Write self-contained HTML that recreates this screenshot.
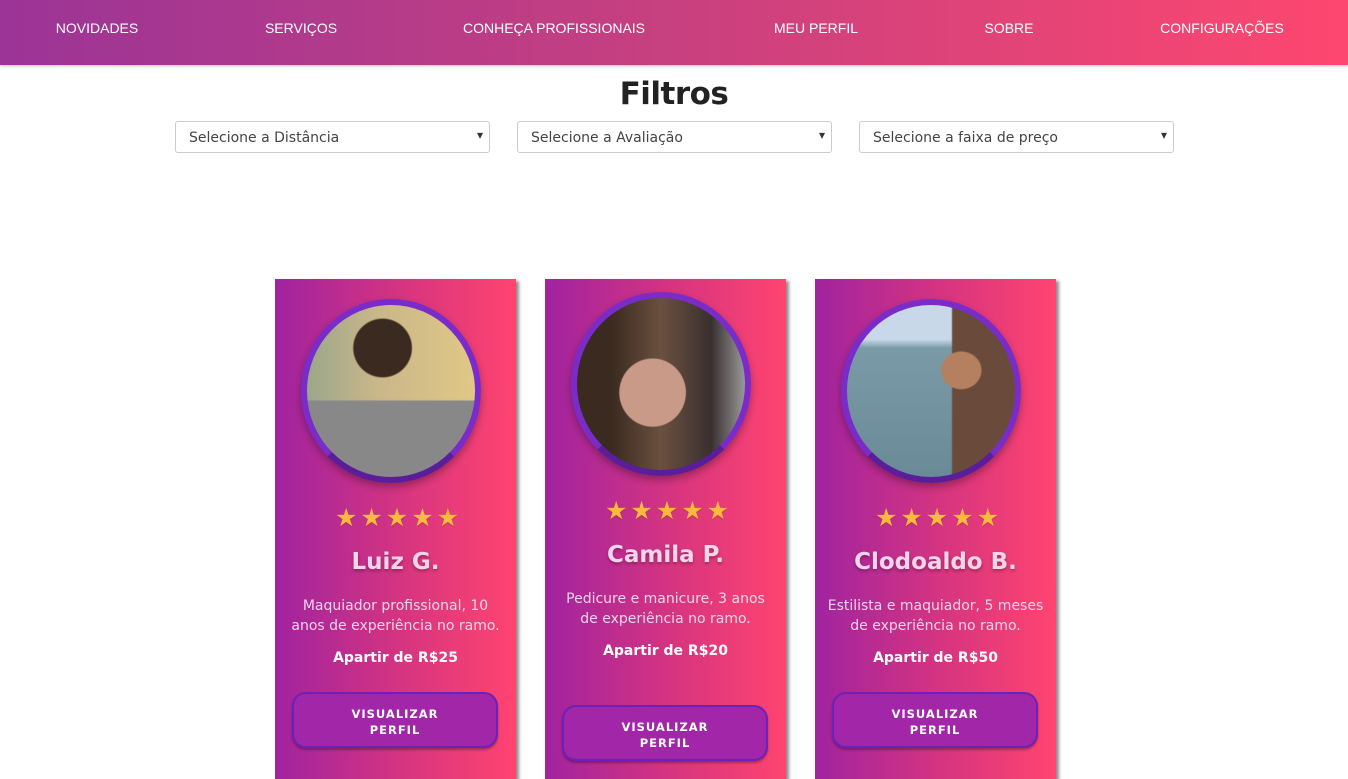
<!DOCTYPE html><html><head><meta charset="utf-8"><style>
*{margin:0;padding:0;box-sizing:border-box}
body{width:1348px;height:767px;overflow:hidden;background:#fff;font-family:"DejaVu Sans","Liberation Sans",sans-serif;position:relative}
nav{position:absolute;left:0;top:0;width:1348px;height:65px;background:linear-gradient(90deg,#9b3497,#c8407f 50%,#fd4770);box-shadow:0 1px 3px rgba(0,0,0,.25)}
nav span{position:absolute;top:20px;color:#fff;font:14px "Liberation Sans",sans-serif;transform:translateX(-50%);white-space:nowrap}
h1{position:absolute;top:76px;left:0;width:1348px;text-align:center;font:bold 31px "DejaVu Sans",sans-serif;color:#222;letter-spacing:-0.5px}
.sel{position:absolute;top:121px;width:315px;height:32px;border:1px solid #ccc;border-radius:3px;font-size:14px;color:#444;padding:8px 13px}
.sel:after{content:"▾";position:absolute;right:6px;top:6px;font-size:12px;color:#333}
.card{position:absolute;top:279px;width:241px;height:500px;background:linear-gradient(90deg,#a0239f,#d8357f 55%,#ff4470);box-shadow:3px 2px 3px rgba(0,0,0,.45);color:#fff;text-align:center}
.ph{position:absolute;left:26px;width:180px;height:184px;border-radius:50%;border:6px solid #7a2cc8;border-bottom-color:#5a1e9a;box-shadow:0 4px 8px rgba(0,0,0,.3);overflow:hidden}
.st{position:absolute;left:3px;width:241px;font-size:25px;color:#fcb940;letter-spacing:3px;text-shadow:0 1px 1px rgba(150,60,0,.4)}
.nm{position:absolute;left:0;width:241px;font-size:23px;font-weight:bold;color:#f3d4ea;text-shadow:0 2px 3px rgba(0,0,0,.3)}
.ds{position:absolute;left:0;width:241px;font-size:14px;line-height:20px;color:#f3d4ea}
.pr{position:absolute;left:0;width:241px;font-size:14px;font-weight:bold}
.bt{position:absolute;left:17px;width:206px;height:56px;border-radius:14px;background:#a126a8;border:2px solid #6c22b8;box-shadow:0 2px 2px rgba(0,0,0,.3);font-size:11.5px;font-weight:bold;letter-spacing:1px;line-height:16px;padding-top:12px}
</style></head><body>
<nav><span style="left:97px">NOVIDADES</span><span style="left:301px">SERVIÇOS</span><span style="left:554px">CONHEÇA PROFISSIONAIS</span><span style="left:816px">MEU PERFIL</span><span style="left:1009px">SOBRE</span><span style="left:1222px">CONFIGURAÇÕES</span></nav>
<h1>Filtros</h1>
<div class="sel" style="left:175px">Selecione a Distância</div>
<div class="sel" style="left:517px">Selecione a Avaliação</div>
<div class="sel" style="left:859px">Selecione a faixa de preço</div>

<div class="card" style="left:275px">
<div class="ph" style="top:20px;background:radial-gradient(circle at 45% 25%,#3a2a20 0 18%,transparent 19%),linear-gradient(180deg,transparent 55%,#888 56%),linear-gradient(90deg,#9aa78a,#c9b68a 40%,#e0c886)"></div>
<div class="st" style="top:224px">★★★★★</div>
<div class="nm" style="top:270px">Luiz G.</div>
<div class="ds" style="top:317px">Maquiador profissional, 10<br>anos de experiência no ramo.</div>
<div class="pr" style="top:371px">Apartir de R$25</div>
<div class="bt" style="top:413px">VISUALIZAR<br>PERFIL</div>
</div>

<div class="card" style="left:545px">
<div class="ph" style="top:13px;background:radial-gradient(ellipse at 45% 55%,#c99a88 0 25%,transparent 26%),linear-gradient(90deg,#3a2a20 20%,#6a5040 50%,#3a3030 80%,#999)"></div>
<div class="st" style="top:217px">★★★★★</div>
<div class="nm" style="top:263px">Camila P.</div>
<div class="ds" style="top:310px">Pedicure e manicure, 3 anos<br>de experiência no ramo.</div>
<div class="pr" style="top:364px">Apartir de R$20</div>
<div class="bt" style="top:426px">VISUALIZAR<br>PERFIL</div>
</div>

<div class="card" style="left:815px">
<div class="ph" style="top:20px;background:radial-gradient(ellipse at 68% 38%,#b58060 0 12%,transparent 13%),linear-gradient(90deg,transparent 62%,#6a4a3a 63%),linear-gradient(180deg,#c8d8e8 20%,#7a9aa8 25%,#6a8a98)"></div>
<div class="st" style="top:224px">★★★★★</div>
<div class="nm" style="top:270px">Clodoaldo B.</div>
<div class="ds" style="top:317px">Estilista e maquiador, 5 meses<br>de experiência no ramo.</div>
<div class="pr" style="top:371px">Apartir de R$50</div>
<div class="bt" style="top:413px">VISUALIZAR<br>PERFIL</div>
</div>
</body></html>
